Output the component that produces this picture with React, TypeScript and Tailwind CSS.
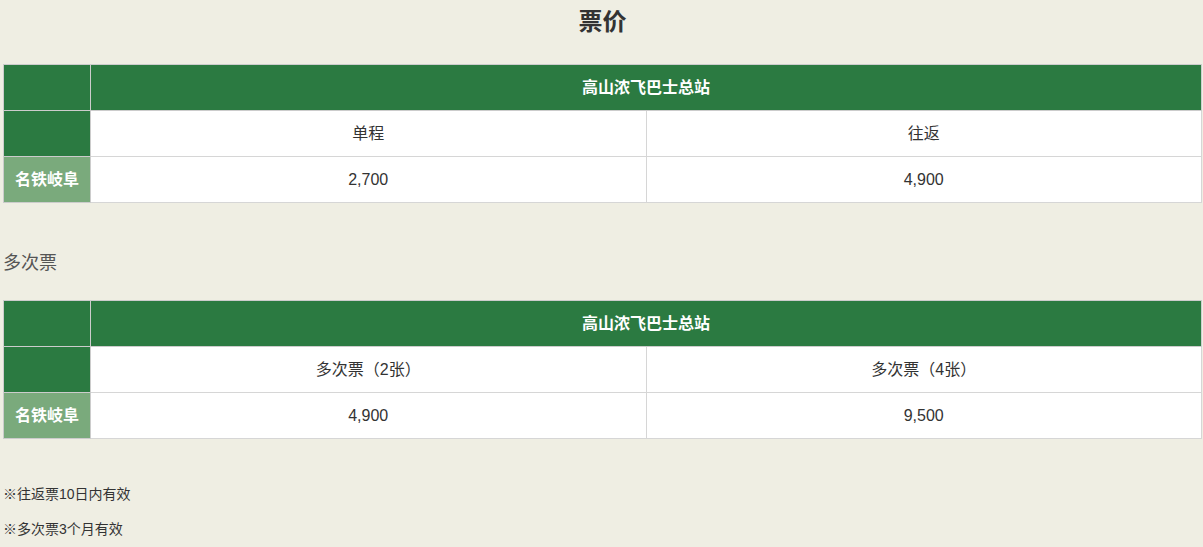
import { FC } from "react";

type PriceTableProps = {
  cols: string[];
  prices: string[];
};

const PriceTable: FC<PriceTableProps> = ({ cols, prices }) => {
  return (
    <table className="w-full table-fixed border-collapse text-[16px] text-[#333]">
      <colgroup>
        <col className="w-[87px]" />
        <col />
        <col />
      </colgroup>
      <tbody>
        <tr className="h-[46px]">
          <th className="border border-[#cccccc] bg-[#2b7a41]"></th>
          <th
            colSpan={2}
            className="border border-[#cccccc] bg-[#2b7a41] font-bold text-white"
          >
            高山浓飞巴士总站
          </th>
        </tr>
        <tr className="h-[46px]">
          <th className="border border-[#cccccc] bg-[#2b7a41]"></th>
          {cols.map((c) => (
            <td
              key={c}
              className="border border-[#d6d6d6] bg-white text-center"
            >
              {c}
            </td>
          ))}
        </tr>
        <tr className="h-[46px]">
          <th className="border border-[#cccccc] bg-[#7aaa7c] font-bold text-white">
            名铁岐阜
          </th>
          {prices.map((p) => (
            <td
              key={p}
              className="border border-[#d6d6d6] bg-white text-center"
            >
              {p}
            </td>
          ))}
        </tr>
      </tbody>
    </table>
  );
};

export default function App() {
  return (
    <div className="min-h-[547px] bg-[#efeee3] pl-[3px] pr-px text-[#333]">
      <div className="font-['Liberation_Sans','Noto_Sans_CJK_SC',sans-serif]">
        <h2 className="pt-[6px] pb-[26px] text-center text-[24px] font-bold leading-[32px] text-[#333]">
          票价
        </h2>
        <PriceTable cols={["单程", "往返"]} prices={["2,700", "4,900"]} />
        <p className="mt-[48px] mb-[25px] text-[18px] leading-[24px] text-[#555]">
          多次票
        </p>
        <PriceTable
          cols={["多次票（2张）", "多次票（4张）"]}
          prices={["4,900", "9,500"]}
        />
        <p className="mt-[46px] text-[14px] leading-[18px] text-[#333]">
          ※往返票10日内有效
        </p>
        <p className="mt-[17px] text-[14px] leading-[18px] text-[#333]">
          ※多次票3个月有效
        </p>
      </div>
    </div>
  );
}
